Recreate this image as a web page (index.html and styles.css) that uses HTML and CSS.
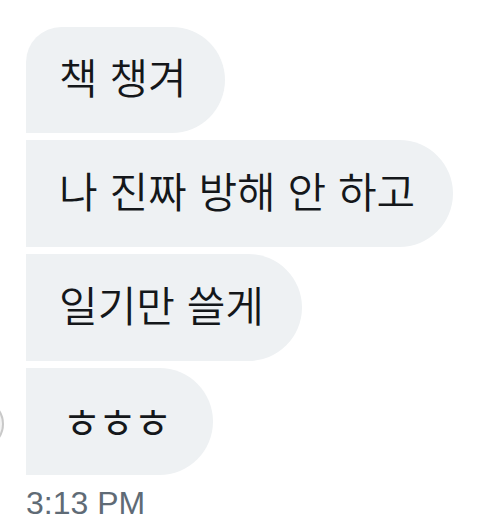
FILE: index.html
```html
<!DOCTYPE html>
<html lang="ko">
<head>
    <meta charset="UTF-8">
    <meta name="viewport" content="width=device-width, initial-scale=1.0">
    <title>DM</title>
    <link rel="stylesheet" href="styles.css">
</head>
<body>
    <main class="thread">
        <div class="avatar"></div>
        <div class="group">
            <div class="bubble first">책 챙겨</div>
            <div class="bubble">나 진짜 방해 안 하고</div>
            <div class="bubble">일기만 쓸게</div>
            <div class="bubble small">ㅎㅎㅎ</div>
        </div>
        <div class="time">3:13 PM</div>
    </main>
</body>
</html>
```

FILE: styles.css
```css
* {
    box-sizing: border-box;
    margin: 0;
    padding: 0;
}

body {
    background-color: #ffffff;
    font-family: "Noto Sans CJK KR", "Liberation Sans", sans-serif;
    color: #14171a;
    overflow: hidden;
}

.thread {
    position: relative;
    padding: 27px 0 0 26px;
}

/* avatar of the sender, mostly cut off by the left edge */
.avatar {
    position: absolute;
    left: -46px;
    top: 399px;
    width: 50px;
    height: 50px;
    border-radius: 50%;
    background-color: #f3f3f3;
    border: 2px solid #c9c9c9;
}

.group {
    display: flex;
    flex-direction: column;
    align-items: flex-start;
    gap: 7px;
}

.bubble {
    display: flex;
    align-items: center;
    height: 107px;
    padding: 0 38px 8px 33px;
    background-color: #eef1f3;
    border-radius: 0 54px 54px 0;
    font-size: 42px;
    font-weight: 350;
    line-height: 1;
}

.bubble.first {
    height: 106px;
    border-radius: 36px 54px 54px 0;
}

.bubble.small {
    font-size: 43px;
    letter-spacing: -4px;
    padding: 0 44px 2px 36px;
}

.time {
    margin-top: 10px;
    font-family: "Liberation Sans", Arial, sans-serif;
    font-size: 32px;
    color: #5f6b76;
}
```
